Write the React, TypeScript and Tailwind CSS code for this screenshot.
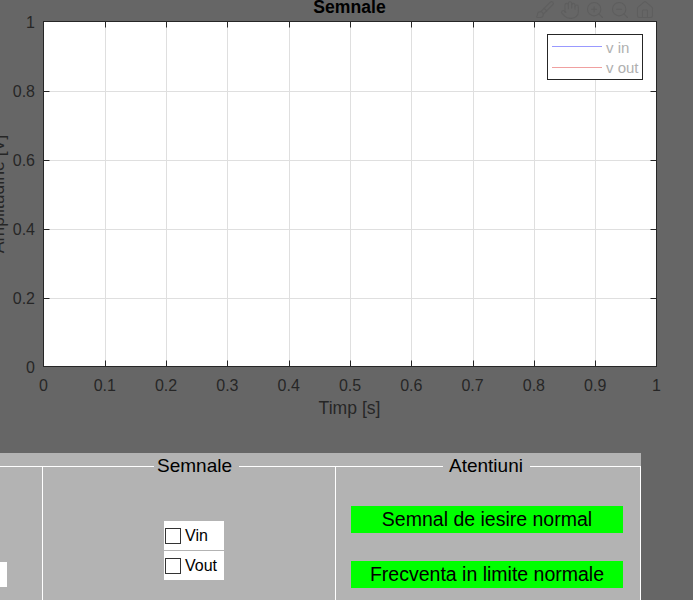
import { Brush, Hand, ZoomIn, ZoomOut, Home } from "lucide-react";

const X0 = 43.5;
const X1 = 656.5;
const Y0 = 21.5;
const Y1 = 366.5;
const xTicks = Array.from({ length: 11 }, (_, i) => ({ v: i / 10, x: X0 + ((X1 - X0) * i) / 10 }));
const yTicks = Array.from({ length: 6 }, (_, i) => ({ v: i / 5, y: Y1 - ((Y1 - Y0) * i) / 5 }));

const fmt = (v: number) => (v === 0 ? "0" : v === 1 ? "1" : v.toFixed(1));

const Chart = () => {
  return (
    <svg width={693} height={453} className="block" fontFamily="'Liberation Sans', Arial, sans-serif">
      <rect x={X0} y={Y0} width={X1 - X0} height={Y1 - Y0} fill="#ffffff" />
      {xTicks.slice(1, -1).map((t) => (
        <line key={t.v} x1={Math.round(t.x) + 0.5} x2={Math.round(t.x) + 0.5} y1={Y0} y2={Y1} stroke="#dfdfdf" />
      ))}
      {yTicks.slice(1, -1).map((t) => (
        <line key={t.v} x1={X0} x2={X1} y1={Math.round(t.y) + 0.5} y2={Math.round(t.y) + 0.5} stroke="#dfdfdf" />
      ))}
      {xTicks.slice(1, -1).map((t) => (
        <g key={t.v} stroke="#262626">
          <line x1={Math.round(t.x) + 0.5} x2={Math.round(t.x) + 0.5} y1={Y0} y2={Y0 + 6} />
          <line x1={Math.round(t.x) + 0.5} x2={Math.round(t.x) + 0.5} y1={Y1} y2={Y1 - 6} />
        </g>
      ))}
      {yTicks.slice(1, -1).map((t) => (
        <g key={t.v} stroke="#262626">
          <line x1={X0} x2={X0 + 6} y1={Math.round(t.y) + 0.5} y2={Math.round(t.y) + 0.5} />
          <line x1={X1} x2={X1 - 6} y1={Math.round(t.y) + 0.5} y2={Math.round(t.y) + 0.5} />
        </g>
      ))}
      <rect x={X0} y={Y0} width={X1 - X0} height={Y1 - Y0} fill="none" stroke="#262626" />

      {/* title, cut by the top edge as in the figure */}
      <text x={349.5} y={13} textAnchor="middle" fontSize={17.6} fontWeight="bold" fill="#000">
        Semnale
      </text>

      {yTicks.map((t) => (
        <text key={t.v} x={35} y={t.y + 6} textAnchor="end" fontSize={16} fill="#262626">
          {fmt(t.v)}
        </text>
      ))}
      {xTicks.map((t) => (
        <text key={t.v} x={t.x} y={391} textAnchor="middle" fontSize={16} fill="#262626">
          {fmt(t.v)}
        </text>
      ))}
      <text x={349.5} y={414} textAnchor="middle" fontSize={17.6} fill="#262626">
        Timp [s]
      </text>
      <text transform="translate(4 194) rotate(-90)" textAnchor="middle" fontSize={17.6} fill="#262626">
        Amplitudine [V]
      </text>

      {/* legend */}
      <rect x={547.5} y={34.5} width={95} height={45} fill="#ffffff" stroke="#262626" />
      <line x1={552} x2={602} y1={46.5} y2={46.5} stroke="#9999ff" />
      <line x1={552} x2={602} y1={67.5} y2={67.5} stroke="#f0a0a0" />
      <text x={606} y={53} fontSize={15} fill="#b0b0b0">
        v in
      </text>
      <text x={606} y={73} fontSize={15} fill="#b0b0b0">
        v out
      </text>
    </svg>
  );
};

const CheckRow = ({ label }: { label: string }) => (
  <div className="flex items-center h-[29px] bg-white pl-[1px] gap-[4px]">
    <span className="w-[16px] h-[16px] border border-[#333333] bg-white" />
    <span className="text-[16px] text-black leading-none">{label}</span>
  </div>
);

const Alert = ({ text }: { text: string }) => (
  <div className="w-[272px] h-[27px] bg-[#00ff00] flex items-center justify-center text-[19.5px] text-black leading-none">
    {text}
  </div>
);

export default function App() {
  return (
    <div className="relative w-[693px] h-[600px] bg-[#666666] overflow-hidden font-['Liberation_Sans',Arial,sans-serif]">
      <Chart />

      <div className="absolute top-0 left-[535px] flex gap-[5px] text-[#5e5e5e]">
        <Brush size={20} strokeWidth={1.3} />
        <Hand size={20} strokeWidth={1.3} />
        <ZoomIn size={20} strokeWidth={1.3} />
        <ZoomOut size={20} strokeWidth={1.3} />
        <Home size={20} strokeWidth={1.3} />
      </div>

      <div className="w-[641px] h-[147px] bg-[#b3b3b3] overflow-hidden flex pt-[2px]">
        <div className="w-[42px] shrink-0 mt-[11px] border-t border-white h-[170px]">
          <div className="w-[7px] h-[25px] bg-white mt-[95px]" />
        </div>

        <fieldset className="w-[293px] shrink-0 border-l border-t border-white h-[170px]">
          <legend className="ml-[111px] pl-[3px] pr-[7px] text-[19px] leading-[22px] text-black">Semnale</legend>
          <div className="ml-[121px] mt-[44px] w-[60px] flex flex-col gap-[1px] bg-[#b3b3b3]">
            <CheckRow label="Vin" />
            <CheckRow label="Vout" />
          </div>
        </fieldset>

        <fieldset className="w-[306px] shrink-0 border-l border-t border-r border-white h-[170px]">
          <legend className="ml-[107px] pl-[6px] pr-[7px] text-[19px] leading-[22px] text-black">Atentiuni</legend>
          <div className="ml-[15px] mt-[29px] flex flex-col gap-[28px]">
            <Alert text="Semnal de iesire normal" />
            <Alert text="Frecventa in limite normale" />
          </div>
        </fieldset>
      </div>
    </div>
  );
}
